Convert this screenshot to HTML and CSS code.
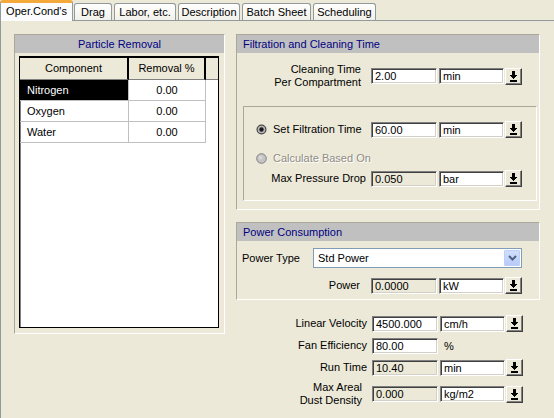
FILE: index.html
```html
<!DOCTYPE html>
<html>
<head>
<meta charset="utf-8">
<link rel="stylesheet" href="styles.css">
</head>
<body>
<div class="tabs">
  <div class="tab active t-oper">Oper.Cond's</div>
  <div class="tab t-drag">Drag</div>
  <div class="tab t-labor">Labor, etc.</div>
  <div class="tab t-desc">Description</div>
  <div class="tab t-batch">Batch Sheet</div>
  <div class="tab t-sched">Scheduling</div>
</div>
<div class="panel">
  <section class="group left-group">
    <div class="group-head center">Particle Removal</div>
    <div class="grid">
      <div class="grow head">
        <div class="c1">Component</div><div class="c2">Removal %</div><div class="c3"></div>
      </div>
      <div class="grow">
        <div class="c1 sel">Nitrogen</div><div class="c2">0.00</div><div class="c3"></div>
      </div>
      <div class="grow">
        <div class="c1">Oxygen</div><div class="c2">0.00</div><div class="c3"></div>
      </div>
      <div class="grow">
        <div class="c1">Water</div><div class="c2">0.00</div><div class="c3"></div>
      </div>
    </div>
  </section>

  <div class="right-col">
    <section class="group filt">
      <div class="group-head">Filtration and Cleaning Time</div>
      <div class="frow two clean">
        <div class="lbl gap10">Cleaning Time<br>Per Compartment</div>
        <div class="fld">2.00</div>
        <div class="fld unit">min</div>
        <div class="dbtn"><svg width="7" height="11" viewBox="0 0 7 11" shape-rendering="crispEdges"><rect x="2" y="0" width="3" height="4"/><rect x="0" y="4" width="7" height="1"/><rect x="1" y="5" width="5" height="1"/><rect x="2" y="6" width="3" height="1"/><rect x="3" y="7" width="1" height="1"/><rect x="0" y="9" width="7" height="2"/></svg></div>
      </div>
      <div class="inner">
        <div class="frow">
          <div class="lbl left">
            <svg class="radio" width="11" height="11" viewBox="0 0 11 11"><circle cx="5.5" cy="5.5" r="5" fill="#4a4a4a"/><circle cx="5.5" cy="5.5" r="3.8" fill="#b8b8b8"/><circle cx="5.5" cy="5.5" r="2.2" fill="#1a1a1a"/></svg>Set Filtration Time
          </div>
          <div class="fld">60.00</div>
          <div class="fld unit">min</div>
          <div class="dbtn"><svg width="7" height="11" viewBox="0 0 7 11" shape-rendering="crispEdges"><rect x="2" y="0" width="3" height="4"/><rect x="0" y="4" width="7" height="1"/><rect x="1" y="5" width="5" height="1"/><rect x="2" y="6" width="3" height="1"/><rect x="3" y="7" width="1" height="1"/><rect x="0" y="9" width="7" height="2"/></svg></div>
        </div>
        <div class="radio-row">
          <svg class="radio" width="11" height="11" viewBox="0 0 11 11"><circle cx="5.5" cy="5.5" r="4.8" fill="#c4c4c4" stroke="#808080" stroke-width="1"/><circle cx="4.5" cy="4.5" r="2" fill="#d6d6d6"/></svg><span class="disabled">Calculate Based On</span>
        </div>
        <div class="frow pr">
          <div class="lbl">Max Pressure Drop</div>
          <div class="fld dis">0.050</div>
          <div class="fld unit">bar</div>
          <div class="dbtn"><svg width="7" height="11" viewBox="0 0 7 11" shape-rendering="crispEdges"><rect x="2" y="0" width="3" height="4"/><rect x="0" y="4" width="7" height="1"/><rect x="1" y="5" width="5" height="1"/><rect x="2" y="6" width="3" height="1"/><rect x="3" y="7" width="1" height="1"/><rect x="0" y="9" width="7" height="2"/></svg></div>
        </div>
      </div>
    </section>

    <section class="group power">
      <div class="group-head">Power Consumption</div>
      <div class="combo-row">
        <div class="lbl left">Power Type</div>
        <div class="combo">
          <span class="combo-text">Std Power</span>
          <span class="combo-btn"><svg width="9" height="6" viewBox="0 0 9 6"><path d="M1 1 L4.5 4.5 L8 1" fill="none" stroke="#4d6185" stroke-width="2"/></svg></span>
        </div>
      </div>
      <div class="frow pw">
        <div class="lbl gap11">Power</div>
        <div class="fld dis">0.0000</div>
        <div class="fld unit">kW</div>
        <div class="dbtn"><svg width="7" height="11" viewBox="0 0 7 11" shape-rendering="crispEdges"><rect x="2" y="0" width="3" height="4"/><rect x="0" y="4" width="7" height="1"/><rect x="1" y="5" width="5" height="1"/><rect x="2" y="6" width="3" height="1"/><rect x="3" y="7" width="1" height="1"/><rect x="0" y="9" width="7" height="2"/></svg></div>
      </div>
    </section>

    <div class="fields">
      <div class="frow">
        <div class="lbl">Linear Velocity</div>
        <div class="fld">4500.000</div>
        <div class="fld unit">cm/h</div>
        <div class="dbtn"><svg width="7" height="11" viewBox="0 0 7 11" shape-rendering="crispEdges"><rect x="2" y="0" width="3" height="4"/><rect x="0" y="4" width="7" height="1"/><rect x="1" y="5" width="5" height="1"/><rect x="2" y="6" width="3" height="1"/><rect x="3" y="7" width="1" height="1"/><rect x="0" y="9" width="7" height="2"/></svg></div>
      </div>
      <div class="frow">
        <div class="lbl">Fan Efficiency</div>
        <div class="fld">80.00</div>
        <div class="pct">%</div>
      </div>
      <div class="frow">
        <div class="lbl">Run Time</div>
        <div class="fld dis">10.40</div>
        <div class="fld unit">min</div>
        <div class="dbtn"><svg width="7" height="11" viewBox="0 0 7 11" shape-rendering="crispEdges"><rect x="2" y="0" width="3" height="4"/><rect x="0" y="4" width="7" height="1"/><rect x="1" y="5" width="5" height="1"/><rect x="2" y="6" width="3" height="1"/><rect x="3" y="7" width="1" height="1"/><rect x="0" y="9" width="7" height="2"/></svg></div>
      </div>
      <div class="frow two">
        <div class="lbl gap10">Max Areal<br>Dust Density</div>
        <div class="fld dis">0.000</div>
        <div class="fld unit">kg/m2</div>
        <div class="dbtn"><svg width="7" height="11" viewBox="0 0 7 11" shape-rendering="crispEdges"><rect x="2" y="0" width="3" height="4"/><rect x="0" y="4" width="7" height="1"/><rect x="1" y="5" width="5" height="1"/><rect x="2" y="6" width="3" height="1"/><rect x="3" y="7" width="1" height="1"/><rect x="0" y="9" width="7" height="2"/></svg></div>
      </div>
    </div>
  </div>
</div>
</body>
</html>
```

FILE: styles.css
```css
html, body {
  margin: 0;
  padding: 0;
}
body {
  width: 554px;
  height: 418px;
  overflow: hidden;
  background: #ece9d8;
  font: 11px "Liberation Sans", Arial, sans-serif;
  color: #000;
}

/* tabs */
.tabs {
  display: flex;
  align-items: flex-end;
  height: 20px;
  border-bottom: 1px solid #919b9c;
}
.tab {
  box-sizing: border-box;
  height: 17px;
  border: 1px solid #919b9c;
  border-bottom: none;
  border-radius: 3px 3px 0 0;
  background: linear-gradient(#ffffff, #f1f0ea);
  text-align: center;
  line-height: 16px;
  margin-right: 2px;
  white-space: nowrap;
}
.tab.active {
  height: 21px;
  margin-bottom: -1px;
  margin-right: 1px;
  background: #fcfcfe;
  border-top: 3px solid #f5a93a;
  line-height: 17px;
  position: relative;
}
.t-oper { width: 73px; }
.t-drag { width: 38px; }
.t-labor { width: 62px; }
.t-desc { width: 62px; }
.t-batch { width: 69px; }
.t-sched { width: 63px; }

/* panel */
.panel {
  box-sizing: border-box;
  display: flex;
  align-items: flex-start;
  height: 397px;
  border-left: 1px solid #919b9c;
  padding: 13px 0 0 13px;
}

.group {
  box-sizing: border-box;
  border: 1px solid;
  border-color: #aca899 #ffffff #ffffff #aca899;
}
.group-head {
  height: 18px;
  line-height: 18px;
  background: #c0c0c0;
  color: #000080;
  padding-left: 6px;
  white-space: nowrap;
}
.group-head.center {
  text-align: center;
  padding-left: 0;
}

/* left group with grid */
.left-group {
  width: 211px;
  height: 300px;
}
.grid {
  box-sizing: border-box;
  width: 200px;
  height: 272px;
  margin: 3px 0 0 4px;
  background: #fff;
  border: 1px solid #000;
  border-top-width: 2px;
  box-shadow: inset 1px 0 0 #808080;
}
.grow {
  display: grid;
  grid-template-columns: 109px 77px 1fr;
  height: 21px;
}
.grow > div {
  box-sizing: border-box;
  line-height: 20px;
  white-space: nowrap;
}
.grow .c1 {
  padding-left: 7px;
  border-right: 1px solid #c0c0c0;
  border-bottom: 1px solid #c0c0c0;
}
.grow .c2 {
  text-align: center;
  border-right: 1px solid #c0c0c0;
  border-bottom: 1px solid #c0c0c0;
}
.grow .c1.sel {
  background: #000;
  color: #fff;
}
.grow.head {
  height: 22px;
}
.grow.head > div {
  background: #ece9d8;
  line-height: 21px;
  text-align: center;
  padding-left: 0;
  border-bottom: 1px solid #808080;
}
.grow.head .c1,
.grow.head .c2 {
  border-right: 2px solid #000;
}

/* right column */
.right-col {
  width: 304px;
  margin-left: 11px;
}
.filt {
  padding-bottom: 8px;
}
.frow {
  display: flex;
  align-items: center;
  height: 17px;
}
.frow.two {
  height: 26px;
}
.lbl {
  flex: 1;
  text-align: right;
  padding-right: 5px;
  line-height: 13px;
  white-space: nowrap;
}
.lbl.gap10 { padding-right: 10px; }
.lbl.gap11 { padding-right: 11px; }
.lbl.left {
  text-align: left;
  display: flex;
  align-items: center;
}
.clean {
  margin-top: 10px;
  padding-right: 17px;
}
.fld {
  box-sizing: border-box;
  width: 66px;
  height: 16px;
  margin-right: 2px;
  padding-left: 3px;
  line-height: 14px;
  background: #fff;
  border: 1px solid;
  border-color: #808080 #ffffff #ffffff #808080;
  box-shadow: inset 1px 1px 0 #404040, inset -1px -1px 0 #d4d0c8;
  white-space: nowrap;
  overflow: hidden;
}
.fld.unit {
  width: 65px;
  margin-right: 1px;
}
.fld.dis {
  background: #ece9d8;
}
.dbtn {
  box-sizing: border-box;
  width: 17px;
  height: 17px;
  display: flex;
  align-items: center;
  justify-content: center;
  background: #ece9d8;
  border: 1px solid;
  border-color: #ffffff #404040 #404040 #ffffff;
  box-shadow: inset -1px -1px 0 #808080;
}
.dbtn svg {
  display: block;
  fill: #000;
}
.pct {
  width: 83px;
  padding-left: 4px;
  box-sizing: border-box;
}

.inner {
  box-sizing: border-box;
  margin: 17px 2px 0 6px;
  padding: 14px 14px 13px 12px;
  border: 1px solid;
  border-color: #aca899 #ffffff #ffffff #aca899;
}
.radio {
  display: block;
  flex: none;
  margin-right: 6px;
}
.radio-row {
  display: flex;
  align-items: center;
  height: 16px;
  margin-top: 12px;
}
.disabled {
  color: #8e8c84;
  text-shadow: 1px 1px 0 #ffffff;
}
.frow.pr {
  margin-top: 4px;
}

/* power */
.power {
  margin-top: 12px;
  padding-bottom: 5px;
}
.combo-row {
  display: flex;
  align-items: center;
  height: 20px;
  margin-top: 7px;
  padding: 0 17px 0 5px;
}
.combo {
  box-sizing: border-box;
  width: 209px;
  height: 20px;
  display: flex;
  align-items: center;
  padding: 0 1px 0 4px;
  background: #fff;
  border: 1px solid #7f9db9;
}
.combo-text {
  flex: 1;
}
.combo-btn {
  box-sizing: border-box;
  width: 16px;
  height: 16px;
  display: flex;
  align-items: center;
  justify-content: center;
  background: linear-gradient(#d2defc, #b8cbf7);
  border: 1px solid #bccffa;
  border-radius: 1px;
}
.combo-btn svg {
  display: block;
}
.frow.pw {
  margin-top: 9px;
  padding-right: 17px;
}

/* bottom fields */
.fields {
  margin-top: 15px;
  padding-right: 17px;
}
.fields .frow + .frow {
  margin-top: 5px;
}
```
